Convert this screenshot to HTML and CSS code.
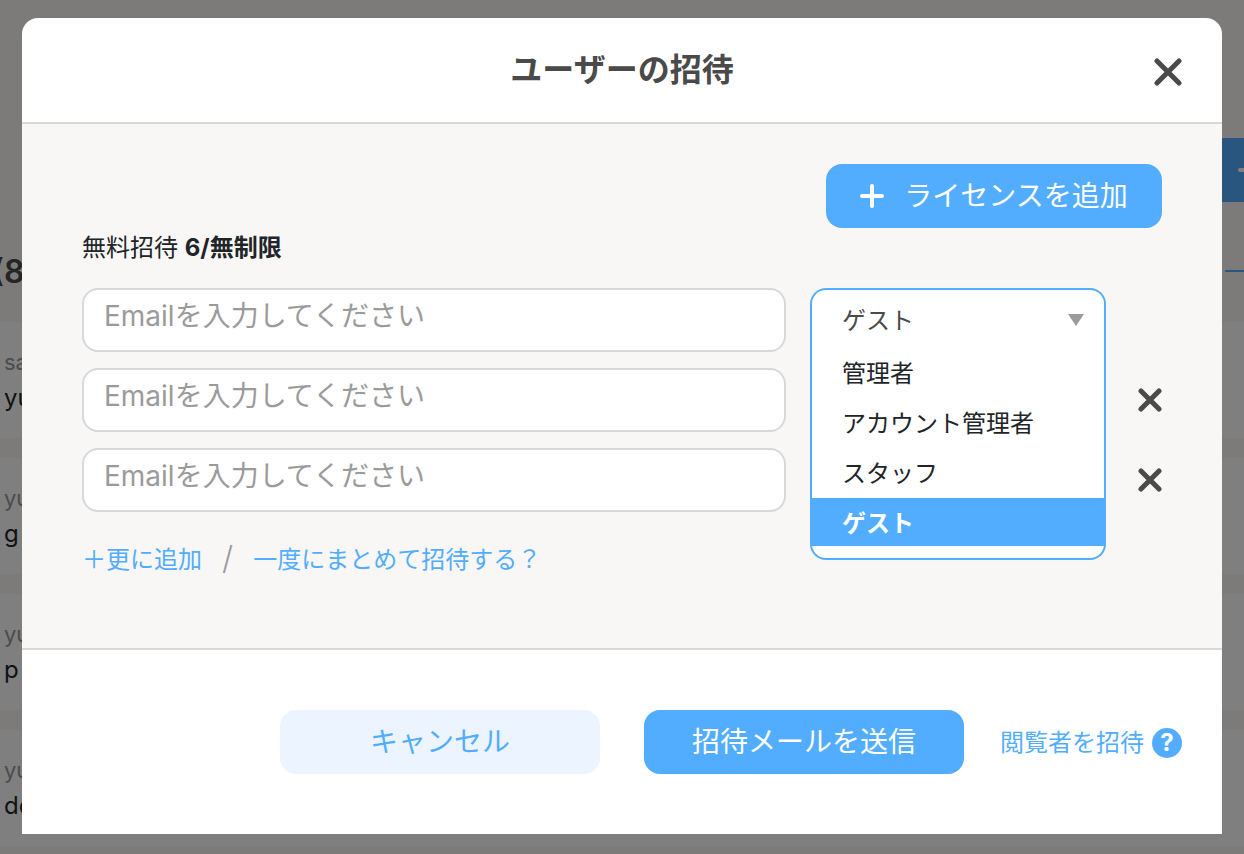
FILE: index.html
```html
<!doctype html>
<html lang="ja">
  <head>
    <meta charset="UTF-8" />
    <meta name="viewport" content="width=device-width, initial-scale=1.0" />
    <title>ユーザーの招待</title>
    <link rel="stylesheet" href="styles.css">
  </head>
  <body>
    <div class="page">
      <div class="page-actions">
        <button type="button" class="page-button" aria-label="追加">
          <svg width="24" height="24" viewBox="0 0 24 24"><path d="M2 12h20M12 2v20" /></svg>
        </button>
      </div>
      <div class="page-heading">
        <h1>(8</h1>
        <a href="#">一</a>
      </div>
      <ul class="user-list">
        <li><span class="user-mail">sa</span><span class="user-name">yu</span></li>
        <li><span class="user-mail">yu</span><span class="user-name">g</span></li>
        <li><span class="user-mail">yu</span><span class="user-name">p</span></li>
        <li><span class="user-mail">yu</span><span class="user-name">do</span></li>
      </ul>
    </div>

    <div class="overlay">
      <form class="modal" role="dialog" aria-labelledby="modalTitle">
        <header class="modal-header">
          <h2 id="modalTitle">ユーザーの招待</h2>
          <button type="button" class="icon-button" aria-label="閉じる">
            <svg width="28" height="28" viewBox="0 0 28 28"><path d="M3 3l22 22M25 3L3 25" /></svg>
          </button>
        </header>

        <div class="modal-body">
          <div class="license">
            <button type="button" class="button button-license">
              <svg width="24" height="24" viewBox="0 0 24 24"><path d="M2 12h20M12 2v20" /></svg>
              ライセンスを追加
            </button>
          </div>
          <p class="quota">無料招待 <strong>6/無制限</strong></p>

          <div class="invites">
            <div class="invite">
              <input type="email" placeholder="Emailを入力してください" aria-label="Email 1" />
              <div class="role open">
                <select aria-label="権限 1">
                  <option>管理者</option>
                  <option>アカウント管理者</option>
                  <option>スタッフ</option>
                  <option selected>ゲスト</option>
                </select>
                <svg class="arrow" width="16" height="12" viewBox="0 0 16 12"><path d="M0 0h16L8 12z" /></svg>
                <ul class="role-menu" role="listbox" aria-label="権限">
                  <li role="option">管理者</li>
                  <li role="option">アカウント管理者</li>
                  <li role="option">スタッフ</li>
                  <li role="option" aria-selected="true" class="selected">ゲスト</li>
                </ul>
              </div>
            </div>
            <div class="invite">
              <input type="email" placeholder="Emailを入力してください" aria-label="Email 2" />
              <div class="role"></div>
              <button type="button" class="icon-button" aria-label="削除">
                <svg width="24" height="24" viewBox="0 0 24 24"><path d="M3 3l18 18M21 3L3 21" /></svg>
              </button>
            </div>
            <div class="invite">
              <input type="email" placeholder="Emailを入力してください" aria-label="Email 3" />
              <div class="role"></div>
              <button type="button" class="icon-button" aria-label="削除">
                <svg width="24" height="24" viewBox="0 0 24 24"><path d="M3 3l18 18M21 3L3 21" /></svg>
              </button>
            </div>
          </div>

          <div class="more">
            <a href="#">＋更に追加</a>
            <span class="slash">/</span>
            <a href="#">一度にまとめて招待する？</a>
          </div>
        </div>

        <footer class="modal-footer">
          <button type="button" class="button button-cancel">キャンセル</button>
          <button type="submit" class="button">招待メールを送信</button>
          <a href="#" class="viewer-link">閲覧者を招待<span class="help">?</span></a>
        </footer>
      </form>
    </div>
  </body>
</html>
```

FILE: styles.css
```css
* {
  box-sizing: border-box;
}
body {
  margin: 0;
  height: 100vh;
  overflow: hidden;
  background-color: #faf7f4;
  color: #212529;
  font-family: Inter, "Noto Sans CJK JP", sans-serif;
  font-size: 24px;
  line-height: 36px;
}
h1,
h2,
p,
ul {
  margin: 0;
  padding: 0;
}
ul {
  list-style: none;
}
a {
  color: #53adff;
  text-decoration: none;
}
button,
input,
select {
  font: inherit;
}
button {
  cursor: pointer;
}
svg {
  display: block;
  flex: none;
}
svg path {
  fill: none;
  stroke: currentColor;
  stroke-width: 4;
  stroke-linecap: round;
}

/* user list behind the dialog */
.page {
  width: calc(100% + 40px);
  padding-top: 138px;
}
.page-actions {
  display: flex;
  justify-content: flex-end;
}
.page-button {
  height: 64px;
  padding: 0 22px 0 38px;
  border: none;
  background-color: #53adff;
  color: #fff;
}
.page-heading {
  display: flex;
  justify-content: space-between;
  align-items: center;
  height: 120px;
  padding: 20px 36px 0 0;
}
.page-heading h1 {
  color: #4a4a4a;
  font-size: 32px;
  font-weight: 600;
  text-indent: -8px;
}
.user-list {
  display: grid;
  gap: 20px;
}
.user-list li {
  display: grid;
  gap: 4px;
  padding: 24px 4px;
  background-color: #fff;
  line-height: 32px;
}
.user-mail {
  color: #999;
  font-size: 22px;
}

.overlay {
  position: fixed;
  inset: 0;
  padding: 18px 22px 20px;
  background-color: rgba(0, 0, 0, 0.5);
}
.modal {
  border-radius: 16px 16px 0 0;
  background-color: #fff;
}
.modal-header {
  display: grid;
  grid-template-columns: 28px 1fr 28px;
  align-items: center;
  padding: 28px 40px;
  border-bottom: 2px solid #d8d8d8;
}
.modal-header h2 {
  grid-column: 2;
  color: #4a4a4a;
  font-size: 32px;
  line-height: 48px;
  text-align: center;
}
.modal-header .icon-button {
  padding-top: 4px;
}
.icon-button {
  padding: 0;
  border: none;
  background: none;
  color: #4a4a4a;
}
.icon-button path {
  stroke-width: 5;
}
.modal-body {
  padding: 40px 60px 70px;
  border-bottom: 2px solid #d8d8d8;
  background-color: #f8f7f5;
}
.button {
  width: 320px;
  height: 64px;
  padding: 0;
  border: none;
  border-radius: 16px;
  background-color: #53adff;
  color: #fff;
  font-size: 28px;
}
.license {
  display: flex;
  justify-content: flex-end;
}
.button-license {
  display: flex;
  align-items: center;
  justify-content: center;
  gap: 20px;
  width: 336px;
}
.quota {
  padding-top: 2px;
  margin-bottom: 22px;
}
.invites {
  display: grid;
  gap: 16px;
}
.invite {
  display: grid;
  grid-template-columns: 1fr 296px 32px;
  column-gap: 24px;
  align-items: center;
}
.invite .icon-button {
  justify-self: end;
}
.invite input {
  width: 100%;
  height: 64px;
  padding: 0 20px 8px;
  border: 2px solid #d8d8d8;
  border-radius: 16px;
  background-color: #fff;
  font-size: 28px;
}
.invite input::placeholder {
  color: #9b9b9b;
}
.role {
  position: relative;
  height: 64px;
}
.role select {
  width: 100%;
  height: 64px;
  padding: 0 30px;
  border: 2px solid #d8d8d8;
  border-radius: 16px;
  background-color: #fff;
  color: #4a4a4a;
  appearance: none;
}
.role.open select {
  border-color: #53adff;
  border-bottom: none;
  border-radius: 16px 16px 0 0;
}
.arrow {
  position: absolute;
  top: 26px;
  right: 22px;
  pointer-events: none;
}
.arrow path {
  fill: #9b9b9b;
  stroke: none;
}
.role-menu {
  position: absolute;
  top: 60px;
  left: 0;
  right: 0;
  z-index: 1;
  display: grid;
  gap: 2px;
  padding-bottom: 12px;
  border: 2px solid #53adff;
  border-top: none;
  border-radius: 0 0 16px 16px;
  background-color: #fff;
}
.role-menu li {
  padding: 4px 30px 0;
  line-height: 44px;
}
.role-menu .selected {
  background-color: #53adff;
  color: #fff;
  font-weight: bold;
}
.more {
  display: flex;
  gap: 20px;
  margin-top: 30px;
}
.slash {
  color: #9b9b9b;
  font-size: 32px;
  font-weight: 300;
  line-height: 32px;
}
.modal-footer {
  display: flex;
  align-items: center;
  justify-content: flex-end;
  padding: 60px 40px;
}
.button-cancel {
  margin-right: 44px;
  background-color: #ecf5ff;
  color: #53adff;
}
.viewer-link {
  display: flex;
  align-items: center;
  gap: 8px;
  margin-left: 36px;
  padding-top: 2px;
}
.help {
  width: 30px;
  border-radius: 50%;
  background-color: #53adff;
  color: #fff;
  font-weight: bold;
  line-height: 30px;
  text-align: center;
}
```
